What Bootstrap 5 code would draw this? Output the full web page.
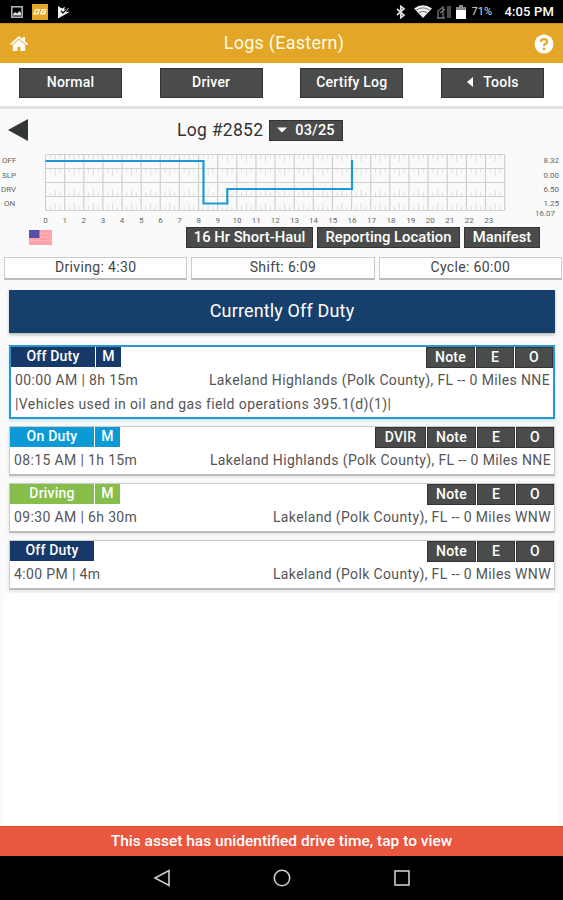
<!DOCTYPE html>
<html lang="en">
<head>
<meta charset="utf-8">
<meta name="viewport" content="width=device-width, initial-scale=1">
<title>Logs (Eastern)</title>
<link href="https://cdn.jsdelivr.net/npm/bootstrap@5.3.0/dist/css/bootstrap.min.css" rel="stylesheet">
<style>
  body { font-family: Roboto, sans-serif; font-size: 14px; line-height: 20px; color: #444; background: #fafafa; height: 900px; overflow: hidden; }
  svg { display: block; flex: none; }
  .statusbar { height: 23px; background: #000; color: #fff; padding: 0 9px 0 11px; }
  .pct { font-size: 11px; letter-spacing: .1px; color: #ddd; width: 33px; }
  .clock { font-size: 13px; font-weight: 500; letter-spacing: .15px; }
  .titlebar { height: 40px; background: #e3a627; color: #fffbe8; padding: 0 9px 0 10px; border-top: 1px solid #c98f1d; }
  .title-text { font-size: 18px; letter-spacing: .25px; padding: 0 0 2px 6px; }
  .actions { height: 46px; background: #fff; border-bottom: 3px solid #e2e2e2; padding: 5px 19px 0 19px; }
  .tool { background: #4a4c4b; color: #fff; border: 1px solid #333; border-radius: 0; padding: 0; font-size: 14px; font-weight: 500; line-height: 17px; letter-spacing: .2px; text-align: center; }
  .actions .tool { width: 103px; height: 30px; padding-bottom: 2px; }
  .logrow { height: 42px; padding: 0 8px; }
  .logname { font-size: 17.500px; letter-spacing: .3px; color: #333; margin-left: 149px; width: 92px; }
  .datebtn { width: 74px; height: 21px; font-size: 14.500px; }
  .chart text { font-size: 8px; fill: #666; }
  .tagrow { height: 21px; padding: 0 23px 0 29px; gap: 4px; }
  .tagrow .tool { height: 21px; font-size: 14.800px; letter-spacing: 0; }
  .w-haul { width: 127px; } .w-report { width: 143px; } .w-manifest { width: 76px; }
  .totals { padding: 9px 1px 0 4px; gap: 4px; }
  .total { height: 23px; background: #fff; border: 1px solid #ccc; border-bottom: 2px solid #bbb; line-height: 19px; text-align: center; letter-spacing: .35px; }
  .state { height: 43px; margin: 10px 8px 0 9px; padding-bottom: 2px; background: #173f6b; color: #fff; font-size: 18px; letter-spacing: .15px; box-shadow: 0 2px 3px #bbb; }
  .events { padding: 12px 8px 0 9px; gap: 7px; }
  .event { height: 50px; background: #fff; border: 1px solid #ccc; border-bottom: 2px solid #bbb; box-shadow: 0 1px 3px #ddd; }
  .event.current { height: 74px; border: 2px solid #2b96cc; box-shadow: 0 2px 3px #c5e6f8; }
  .duty { height: 20px; line-height: 18px; font-weight: 500; color: #fff; letter-spacing: .2px; text-align: center; }
  .duty-name { width: 84px; }
  .duty-mark { width: 25px; }
  .off { background: #17396a; } .on { background: #0b9ad6; } .drive { background: #87bd4b; }
  .tool-line { gap: 1px; height: 20px; }
  .event .tool { height: 21px; }
  .w-note { width: 49px; } .w-sq { width: 38px; } .w-dvir { width: 51px; }
  .info { padding: 0 3px 0 4px; line-height: 26px; letter-spacing: .36px; color: #555; white-space: nowrap; }
  .remark { line-height: 22px; letter-spacing: .4px; }
  .blank { background: #fff; margin: 3px 4px 0; }
  .alertbar { height: 30px; background: #e9573f; border-top: 1px solid #d94a2a; color: #fff; font-size: 15.500px; font-weight: 500; padding-bottom: 2px; }
  .navkeys { height: 44px; background: #000; gap: 102px; }
</style>
<script src="https://cdn.jsdelivr.net/npm/bootstrap@5.3.0/dist/js/bootstrap.bundle.min.js"></script>
</head>
<body class="d-flex flex-column">
<div class="statusbar d-flex align-items-center">
  <svg width="12" height="12" viewBox="0 0 12 12"><rect x=".8" y=".8" width="10.400" height="10.400" fill="none" stroke="#bbb" stroke-width="1.500"/><path fill="#ddd" d="M2 9.500V8l2-2 2 1.500L8.500 5 10 7v2.500z"/></svg>
  <svg class="ms-2" width="18" height="16" viewBox="0 0 18 16"><rect x="1" width="16" height="16" fill="#e3a627"/><path fill="none" stroke="#fff4d0" stroke-width="1.400" d="M8.300 5.800H4.500L3 9.700h3.800zM15.500 5.800h-4.300L9.700 9.700h4l.8-2H12"/></svg>
  <svg class="ms-2" width="14" height="14" viewBox="0 0 14 14"><path fill="#eee" d="M1 1 5 3.500l3-1.700L7 4.800l5-1.600L9 7l4-.2L1 13.500z"/><path d="m4 6 2 2 4-4" fill="none" stroke="#000" stroke-width="1.200"/></svg>
  <svg class="ms-auto me-2" width="10" height="14" viewBox="0 0 10 14"><path fill="none" stroke="#ddd" stroke-width="1.700" d="m1 4 7 6.200-3.200 2.500V1.300L8 3.800 1 10"/></svg>
  <svg width="18" height="13" viewBox="0 0 18 13"><path fill="#eee" d="M0 3.500Q9-3 18 3.500L9 13z"/><path d="M2.500 5Q9 .8 15.500 5M5 7.500q4-2.500 8 0" fill="none" stroke="#555" stroke-width=".8"/></svg>
  <svg class="ms-1 me-1" width="15" height="14" viewBox="0 0 15 14"><path fill="none" stroke="#777" stroke-width="1.300" d="M2 13V6l5-4v11zM1 13h8M12 1v12M14 1v12M4 8l5-4"/></svg>
  <svg class="me-1" width="12" height="14" viewBox="0 0 12 14"><path fill="#888" d="M1 2h3V0h4v2h3v3H1z"/><path fill="#fff" d="M1 5h10v9H1z"/></svg>
  <span class="pct">71%</span>
  <span class="clock">4:05 PM</span>
</div>
<header class="titlebar d-flex align-items-center justify-content-between">
  <svg width="18" height="16" viewBox="0 0 18 16"><path fill="#fff" d="M9 0 0 8l1.200 1.300L9 2.600l7.800 6.700L18 8l-3-2.700V1h-2.400v2.200zM9 3.600 2.800 9V15H7.500v-4h3v4h4.700V9z"/></svg>
  <span class="title-text">Logs (Eastern)</span>
  <svg width="20" height="20" viewBox="0 0 20 20"><circle cx="10" cy="10" r="9.500" fill="#fff"/><path d="M6.800 7.800c.2-3.600 6.400-3.600 6.400-.1C13.200 9.800 10 9.700 10 12" fill="none" stroke="#e3a627" stroke-width="2.300"/><circle cx="10" cy="14.800" r="1.400" fill="#e3a627"/></svg>
</header>
<nav class="actions d-flex justify-content-between">
  <button class="btn tool">Normal</button>
  <button class="btn tool">Driver</button>
  <button class="btn tool">Certify Log</button>
  <button class="btn tool d-flex justify-content-center align-items-center"><svg class="me-2" width="9" height="10" viewBox="0 0 9 10"><path fill="#fff" d="M1 5 7 0v10z"/></svg>Tools</button>
</nav>
<div class="logrow d-flex align-items-center">
  <svg width="20" height="22" viewBox="0 0 20 22"><path fill="#333736" d="M0 11 20 0v22z"/></svg>
  <span class="logname text-nowrap">Log #2852</span>
  <button class="btn tool datebtn d-flex align-items-center justify-content-center"><svg class="me-2" width="10" height="6" viewBox="0 0 10 6"><path fill="#fff" d="M0 .5h10l-5 5z"/></svg>03/25</button>
</div>
<svg class="chart" width="563" height="76" viewBox="0 151 563 76">
  <g id="grid" fill="none"></g>
  <path d="M45.500 161h158v42.500h23.800v-14.500H352v-29" fill="none" stroke="#1d9ad6" stroke-width="2.200"/>
  <g id="hours" text-anchor="middle"></g>
  <text x="2" y="163">OFF</text><text x="2" y="178">SLP</text><text x="1" y="192">DRV</text><text x="4" y="206">ON</text>
  <g text-anchor="end"><text x="559" y="163">8.32</text><text x="559" y="178">0.00</text><text x="559" y="192">6.50</text><text x="559" y="206">1.25</text><text x="555" y="216">16.07</text></g>
</svg>
<div class="tagrow d-flex align-items-center">
  <svg class="me-auto" width="23" height="15" viewBox="0 0 23 15"><path fill="#ffa3a8" d="M0 0h23v15H0z"/><path d="M0 3.500h23M0 7h23M0 10.500h23" stroke="#ffb3b8"/><path fill="#5450a8" d="M0 0h10.500v8H0z"/></svg>
  <button class="btn tool w-haul">16 Hr Short-Haul</button>
  <button class="btn tool w-report">Reporting Location</button>
  <button class="btn tool w-manifest">Manifest</button>
</div>
<div class="totals d-flex">
  <div class="total flex-fill w-100">Driving: 4:30</div>
  <div class="total flex-fill w-100">Shift: 6:09</div>
  <div class="total flex-fill w-100">Cycle: 60:00</div>
</div>
<div class="state d-flex align-items-center justify-content-center">Currently Off Duty</div>
<main class="events d-flex flex-column">
  <section class="event current">
    <div class="tool-line d-flex"><span class="duty duty-name off">Off Duty</span><span class="duty duty-mark off">M</span>
      <button class="btn tool w-note ms-auto">Note</button><button class="btn tool w-sq">E</button><button class="btn tool w-sq">O</button></div>
    <div class="info d-flex justify-content-between"><span>00:00 AM | 8h 15m</span><span>Lakeland Highlands (Polk County), FL -- 0 Miles NNE</span></div>
    <div class="info remark">|Vehicles used in oil and gas field operations 395.1(d)(1)|</div>
  </section>
  <section class="event">
    <div class="tool-line d-flex"><span class="duty duty-name on">On Duty</span><span class="duty duty-mark on">M</span>
      <button class="btn tool w-dvir ms-auto">DVIR</button><button class="btn tool w-note">Note</button><button class="btn tool w-sq">E</button><button class="btn tool w-sq">O</button></div>
    <div class="info d-flex justify-content-between"><span>08:15 AM | 1h 15m</span><span>Lakeland Highlands (Polk County), FL -- 0 Miles NNE</span></div>
  </section>
  <section class="event">
    <div class="tool-line d-flex"><span class="duty duty-name drive">Driving</span><span class="duty duty-mark drive">M</span>
      <button class="btn tool w-note ms-auto">Note</button><button class="btn tool w-sq">E</button><button class="btn tool w-sq">O</button></div>
    <div class="info d-flex justify-content-between"><span>09:30 AM | 6h 30m</span><span>Lakeland (Polk County), FL -- 0 Miles WNW</span></div>
  </section>
  <section class="event">
    <div class="tool-line d-flex"><span class="duty duty-name off">Off Duty</span>
      <button class="btn tool w-note ms-auto">Note</button><button class="btn tool w-sq">E</button><button class="btn tool w-sq">O</button></div>
    <div class="info d-flex justify-content-between"><span>4:00 PM | 4m</span><span>Lakeland (Polk County), FL -- 0 Miles WNW</span></div>
  </section>
</main>
<div class="blank flex-grow-1"></div>
<div class="alertbar d-flex align-items-center justify-content-center">This asset has unidentified drive time, tap to view</div>
<footer class="navkeys d-flex align-items-center justify-content-center">
  <svg width="18" height="18" viewBox="0 0 18 18"><path d="M2 9 16 1.500v15z" fill="none" stroke="#ccc" stroke-width="1.600"/></svg>
  <svg width="18" height="18" viewBox="0 0 18 18"><circle cx="9" cy="9" r="7.700" fill="none" stroke="#ccc" stroke-width="1.600"/></svg>
  <svg width="18" height="18" viewBox="0 0 18 18"><rect x="2" y="2" width="14" height="14" fill="none" stroke="#ccc" stroke-width="1.600"/></svg>
</footer>
<script>
  const left = 45.5, top0 = 154.5, hour = 19.13, row = 14;
  let major = '', minor = '', labels = '';
  for (let r = 0; r < 5; r++) major += `M${left} ${top0 + r * row}h${hour * 24}`;
  for (let h = 0; h <= 24; h++) {
    major += `M${left + h * hour} ${top0}v${row * 4}`;
    if (h === 24) break;
    const x = h < 17 ? left + h * 19.15 : 352 + (h - 16) * 19.55;
    labels += `<text x="${x}" y="223">${h}</text>`;
    for (let r = 0; r < 4; r++) for (let q = 1; q < 4; q++) {
      const len = q === 2 ? 7 : 4, y = top0 + (r < 2 ? r : r + 1) * row;
      minor += `M${left + (h + q / 4) * hour} ${y}v${r < 2 ? len : -len}`;
    }
  }
  document.getElementById('grid').innerHTML = `<path d="${minor}" stroke="#ddd"/><path d="${major}" stroke="#d0d0d0" stroke-width="1.2"/>`;
  document.getElementById('hours').innerHTML = labels;
</script>
</body>
</html>
